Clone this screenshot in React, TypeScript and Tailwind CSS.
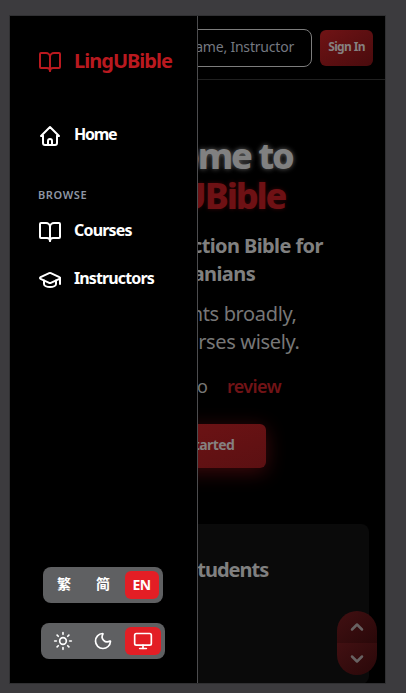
import { BookOpen, GraduationCap, Sun, Moon, Monitor, ChevronUp, ChevronDown } from "lucide-react";
import type { ReactNode } from "react";

function HomeIcon() {
  return (
    <svg width="24" height="24" viewBox="0 0 24 24" fill="none" stroke="currentColor" strokeWidth="2" strokeLinecap="round" strokeLinejoin="round">
      <path d="M5 12H3l9-9 9 9h-2" />
      <path d="M5 12v7a2 2 0 0 0 2 2h10a2 2 0 0 0 2-2v-7" />
      <path d="M10 21v-4a2 2 0 0 1 4 0v4" />
    </svg>
  );
}

function NavItem({ icon, label, tracking }: { icon: ReactNode; label: string; tracking: string }) {
  return (
    <a className="flex h-12 items-center gap-3 pl-7 text-white">
      {icon}
      <span className={`-mt-1 text-base font-bold whitespace-nowrap ${tracking}`}>{label}</span>
    </a>
  );
}

function Sidebar() {
  return (
    <aside className="absolute inset-y-0 left-0 flex w-[188px] flex-col border-r border-[#4c4c4e] bg-black">
      <div className="flex h-[91px] items-center gap-3 pl-7 text-[#b9191f]">
        <BookOpen size={24} />
        <span className="-mt-0.5 text-xl font-bold tracking-[-0.98px]">LingUBible</span>
      </div>
      <nav className="flex flex-col pt-[5px]">
        <NavItem icon={<HomeIcon />} label="Home" tracking="tracking-[-1.3px]" />
        <div className="flex h-12 items-end pb-[5px] pl-7">
          <span className="text-[11px] leading-4 font-semibold tracking-[0.6px] text-[#8e96a5] uppercase">Browse</span>
        </div>
        <NavItem icon={<BookOpen size={24} />} label="Courses" tracking="tracking-[-0.8px]" />
        <NavItem icon={<GraduationCap size={24} />} label="Instructors" tracking="tracking-[-0.88px]" />
      </nav>
      <div className="mt-auto flex flex-col items-center gap-5 pr-[2px] pb-6">
        <div className="flex h-9 w-[120px] items-center rounded-lg bg-[#5f6062] px-1 text-sm font-bold text-white">
          <span className="w-[35px] pb-0.5 text-center">繁</span>
          <span className="ml-1 w-[35px] pb-0.5 text-center">简</span>
          <span className="ml-auto flex h-7 w-[34px] items-center justify-center rounded-md bg-[#e31e25] pb-px tracking-[-0.6px]">EN</span>
        </div>
        <div className="flex h-9 w-[124px] items-center rounded-lg bg-[#5f6062] px-1 text-white">
          <span className="flex w-9 justify-center"><Sun size={20} strokeWidth={2} /></span>
          <span className="ml-1 flex w-9 justify-center"><Moon size={20} strokeWidth={2} /></span>
          <span className="ml-1 flex h-7 w-9 items-center justify-center rounded-md bg-[#e31e25]"><Monitor size={20} strokeWidth={2} /></span>
        </div>
      </div>
    </aside>
  );
}

export default function App() {
  return (
    <div className="h-[693px] w-[406px] bg-[#3c3b3e] pt-[15px] pl-[9px] font-['Noto_Sans','Noto_Sans_CJK_SC',sans-serif]">
      <div className="relative h-[669px] w-[377px] overflow-hidden border border-[#303032] bg-black">
        <header className="flex h-16 items-center justify-end gap-2 border-b border-[#202020] pr-3">
          <div className="flex h-[38px] w-[260px] items-center justify-end rounded-lg border border-[#7c7c7c] pr-[17px] pb-px text-sm tracking-[-0.2px] whitespace-nowrap text-[#757981]">
            Course Name, Instructor
          </div>
          <button className="h-9 w-[53px] rounded-md bg-linear-to-br from-[#701315] to-[#490b0d] pb-0.5 text-xs font-bold tracking-[-0.65px] text-[#858080]">Sign In</button>
        </header>
        <main className="flex flex-col items-center whitespace-nowrap">
          <h1 className="mt-14 text-center text-4xl leading-10 font-extrabold tracking-[-2.1px] text-[#808080]">
            <span className="block pr-1 [text-shadow:0_0_5px_#606060]">Welcome to</span>
            <span className="block text-[#6e1114] [text-shadow:0_0_4px_#350608]">LingUBible</span>
          </h1>
          <p className="mt-4 text-center text-xl leading-7 font-bold tracking-[-0.6px] text-[#808080]">
            <span className="block pl-[11px]">Course Selection Bible for</span>
            <span className="block">Lingnanians</span>
          </p>
          <p className="mt-3 text-center text-xl leading-7 tracking-[-0.35px] text-[#777]">
            <span className="block pr-[14px]">Explore talents broadly,</span>
            <span className="block">choose courses wisely.</span>
          </p>
          <div className="mt-4 flex w-full justify-end gap-[19px] pr-[104px] text-lg leading-7 text-[#777]">
            <span>Login to</span>
            <span className="font-semibold tracking-[-0.6px] text-[#711316]">review</span>
          </div>
          <button className="mt-6 h-11 w-[137px] rounded-md bg-linear-to-br from-[#711315] to-[#5b1012] pb-0.5 text-sm font-bold tracking-[-0.6px] text-[#858080] shadow-[0_4px_20px_#3d090b]">Get Started</button>
          <section className="mt-14 h-[160px] w-[343px] rounded-lg bg-[#0a0a0a] pt-8 text-center">
            <h2 className="text-xl leading-7 font-bold tracking-[-1px] text-[#808080]">For All Students</h2>
          </section>
        </main>
        <div className="absolute right-2 bottom-2 flex h-16 w-10 flex-col overflow-hidden rounded-full text-[#686262]">
          <button className="flex h-8 items-center justify-center bg-linear-to-br from-[#421012] to-[#290809]"><ChevronUp size={20} strokeWidth={3} /></button>
          <button className="flex h-8 items-center justify-center bg-linear-to-br from-[#421012] to-[#290809]"><ChevronDown size={20} strokeWidth={3} /></button>
        </div>
        <Sidebar />
      </div>
    </div>
  );
}
